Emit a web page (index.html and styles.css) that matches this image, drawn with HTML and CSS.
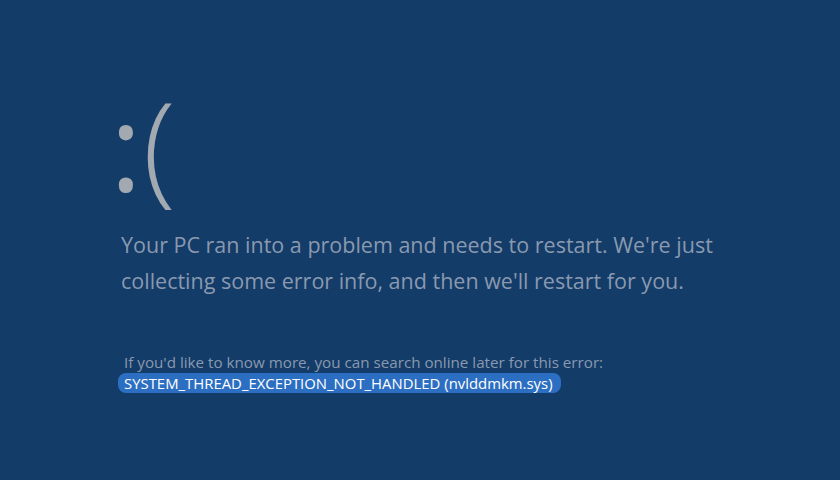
FILE: index.html
```html
<!DOCTYPE html>
<html lang="en">
<head>
<meta charset="utf-8">
<title>Blue screen</title>
<link rel="stylesheet" href="styles.css">
</head>
<body>
<main class="screen">
  <div class="frown"><span class="colon">:</span><span class="paren">(</span></div>
  <p class="message">Your PC ran into a problem and needs to restart. We're just<br>collecting some error info, and then we'll restart for you.</p>
  <div class="details">
    <p class="hint">If you'd like to know more, you can search online later for this error:</p>
    <span class="code">SYSTEM_THREAD_EXCEPTION_NOT_HANDLED (nvlddmkm.sys)</span>
  </div>
</main>
</body>
</html>
```
FILE: styles.css
```css
html, body {
  margin: 0;
  padding: 0;
  background: #133c69;
}
.screen {
  width: 840px;
  height: 480px;
  box-sizing: border-box;
  padding: 84px 0 0 110px;
  display: flex;
  flex-direction: column;
  align-items: flex-start;
  font-family: "Open Sans", "Noto Sans", sans-serif;
  color: #8a99af;
}
.frown {
  display: flex;
  align-items: baseline;
  height: 143px;
  color: #a3a9b1;
}
.colon {
  font-size: 121px;
  font-weight: 500;
  line-height: 1;
}
.paren {
  margin-left: 1px;
  font-size: 121px;
  font-weight: 300;
  line-height: 1;
}
.message {
  margin: 0 0 0 11px;
  font-size: 21.5px;
  line-height: 36px;
  font-weight: 400;
}
.details {
  margin: 53px 0 0 8px;
  display: flex;
  flex-direction: column;
  align-items: flex-start;
}
.hint {
  margin: 0 0 0 6px;
  font-size: 15.2px;
  line-height: 20px;
}
.code {
  margin-top: 1px;
  padding: 0 8px 0 6px;
  background: #2c6fc2;
  border-radius: 8px;
  color: #ffffff;
  font-size: 14.9px;
  line-height: 20px;
}
```
